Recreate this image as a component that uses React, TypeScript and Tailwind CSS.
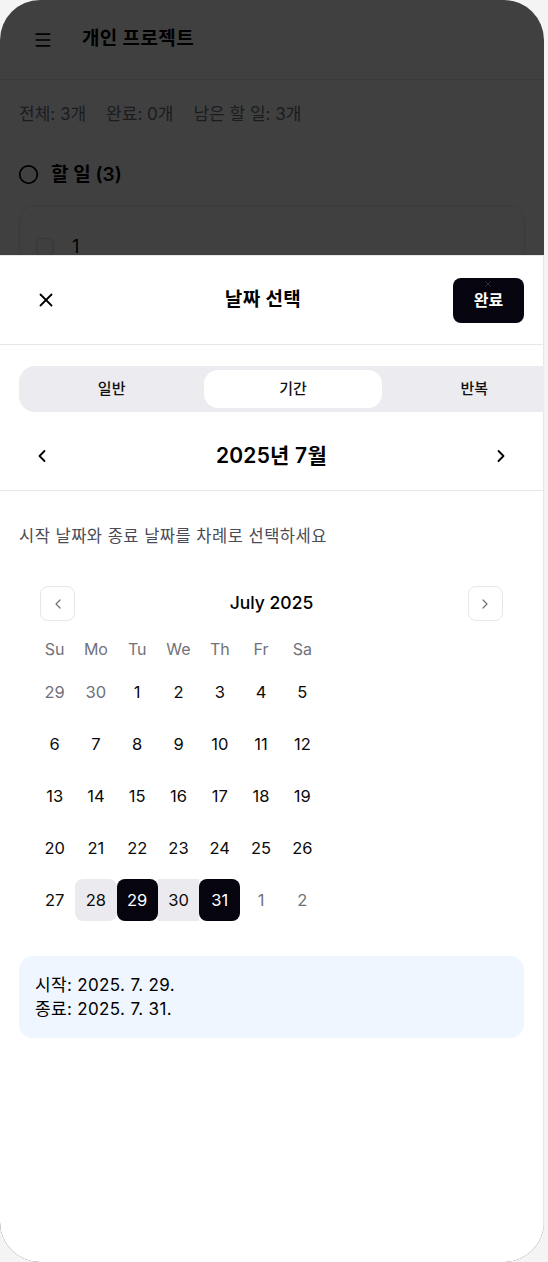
import { ChevronLeft, ChevronRight, Circle, Menu, X } from 'lucide-react';

const FONT = { fontFamily: 'Inter, "Noto Sans CJK KR", sans-serif' };

const WEEKDAYS = ['Su', 'Mo', 'Tu', 'We', 'Th', 'Fr', 'Sa'];

type Day = { n: number; outside?: boolean };

const WEEKS: Day[][] = [
  [{ n: 29, outside: true }, { n: 30, outside: true }, { n: 1 }, { n: 2 }, { n: 3 }, { n: 4 }, { n: 5 }],
  [6, 7, 8, 9, 10, 11, 12].map((n) => ({ n })),
  [13, 14, 15, 16, 17, 18, 19].map((n) => ({ n })),
  [20, 21, 22, 23, 24, 25, 26].map((n) => ({ n })),
  [{ n: 27 }, { n: 28 }, { n: 29 }, { n: 30 }, { n: 31 }, { n: 1, outside: true }, { n: 2, outside: true }],
];

function dayClass(d: Day, row: number) {
  const last = row === 4 && !d.outside;
  if (last && (d.n === 29 || d.n === 31)) return 'rounded-lg bg-[#05040f] text-white';
  if (last && d.n === 30) return 'bg-[#ebebef] text-[#0a0a0a]';
  if (last && d.n === 28) return 'rounded-lg bg-[#ebebef] text-[#0a0a0a]';
  if (d.outside) return 'text-[#71717a]';
  return 'text-[#0a0a0a]';
}

// 뒤에 깔린 프로젝트 화면 (어둡게 덮임)
function BackgroundPage() {
  return (
    <div className="flex flex-col">
      <header className="flex h-[80px] items-center gap-[29px] border-b border-gray-200 pl-[33px]">
        <Menu size={20} strokeWidth={2} className="text-black" />
        <h1 className="text-[19px] font-bold tracking-[0.02em] text-black">개인 프로젝트</h1>
      </header>
      <div className="flex gap-5 px-[19px] pt-[22px] text-[17px] text-gray-500">
        <span>전체: 3개</span>
        <span>완료: 0개</span>
        <span>남은 할 일: 3개</span>
      </div>
      <div className="mt-[33px] flex items-center gap-[12px] px-[18px] text-[19px] font-semibold text-black">
        <Circle size={21} strokeWidth={2} />
        <span>할 일 (3)</span>
      </div>
      <div className="mx-[19px] mt-[16px] h-[120px] rounded-2xl border border-gray-200 px-[16px] pt-[27px]">
        <div className="flex items-center gap-[18px]">
          <span className="h-[18px] w-[18px] rounded-[5px] border border-gray-300 bg-gray-50" />
          <span className="text-[18px] text-black">1</span>
        </div>
      </div>
    </div>
  );
}

function DateSheet() {
  return (
    <div className="absolute inset-x-0 bottom-0 top-[255px] border-t border-r border-gray-200 bg-white">
      {/* 헤더 */}
      <div className="relative flex h-[89px] items-center justify-between border-b border-gray-200 px-[19px]">
        <button type="button" className="flex h-10 w-[54px] items-center justify-center text-black" aria-label="닫기">
          <X size={22} strokeWidth={2} />
        </button>
        <h2 className="text-[19px] font-bold tracking-[0.02em] text-black">날짜 선택</h2>
        <button type="button" className="h-[45px] w-[71px] rounded-lg bg-[#05040f] text-[16px] font-semibold text-white">
          완료
        </button>
        <X size={10} strokeWidth={2} className="absolute right-[50px] top-[23px] text-white/20" />
      </div>

      {/* 탭 */}
      <div className="ml-[19px] mt-[21px] grid w-[548px] grid-cols-3 gap-1 rounded-2xl bg-[#ebebf0] p-1">
        <button type="button" className="h-[38px] rounded-[14px] text-[15px] font-medium text-[#111]">일반</button>
        <button type="button" className="h-[38px] rounded-[14px] bg-white text-[15px] font-medium text-[#111]">기간</button>
        <button type="button" className="h-[38px] rounded-[14px] text-[15px] font-medium text-[#111]">반복</button>
      </div>

      {/* 월 이동 */}
      <div className="mt-[9px] flex h-[70px] items-center justify-between border-b border-gray-200 px-[19px]">
        <button type="button" className="flex w-[46px] items-center justify-center text-black" aria-label="이전 달">
          <ChevronLeft size={20} strokeWidth={2.2} />
        </button>
        <span className="text-[21px] font-semibold tracking-[0.01em] text-black">2025년 7월</span>
        <button type="button" className="flex w-[46px] items-center justify-center text-black" aria-label="다음 달">
          <ChevronRight size={20} strokeWidth={2.2} />
        </button>
      </div>

      <p className="px-[19px] pt-[33px] text-[16.5px] leading-6 tracking-[0.03em] text-[#4b4b55]">
        시작 날짜와 종료 날짜를 차례로 선택하세요
      </p>

      {/* 달력 */}
      <div className="mx-[19px] mt-[38px] px-[15px]">
        <div className="flex h-[35px] items-center justify-between px-[6px]">
          <button type="button" className="flex h-[35px] w-[35px] items-center justify-center rounded-lg border border-gray-200 text-[#71717a]">
            <ChevronLeft size={16} strokeWidth={1.8} />
          </button>
          <span className="text-[17.5px] font-medium text-black">July 2025</span>
          <button type="button" className="flex h-[35px] w-[35px] items-center justify-center rounded-lg border border-gray-200 text-[#71717a]">
            <ChevronRight size={16} strokeWidth={1.8} />
          </button>
        </div>
        <div className="mt-[16px] grid w-[289px] grid-cols-7">
          {WEEKDAYS.map((w) => (
            <span key={w} className="flex h-6 items-center justify-center text-[16px] text-[#71717a]">{w}</span>
          ))}
        </div>
        <div className="mt-[10px] flex w-[289px] flex-col gap-[10px]">
          {WEEKS.map((week, r) => (
            <div key={r} className="grid grid-cols-7">
              {week.map((d, i) => (
                <span key={i} className={`flex h-[42px] items-center justify-center text-[16.5px] ${dayClass(d, r)}`}>
                  {d.n}
                </span>
              ))}
            </div>
          ))}
        </div>
      </div>

      {/* 선택 결과 */}
      <div className="mx-[19px] mt-[35px] rounded-[14px] bg-[#eff6ff] px-4 py-[17px] text-[17px] leading-6 tracking-[0.02em] text-black">
        <p>시작: 2025. 7. 29.</p>
        <p>종료: 2025. 7. 31.</p>
      </div>
    </div>
  );
}

export default function App() {
  return (
    <div className="min-h-screen bg-[#f4f4f4]" style={FONT}>
      <div className="relative h-[1262px] w-[544px] overflow-hidden rounded-[40px] bg-white">
        <BackgroundPage />
        <div className="absolute inset-0 bg-black/75" />
        <DateSheet />
      </div>
    </div>
  );
}
